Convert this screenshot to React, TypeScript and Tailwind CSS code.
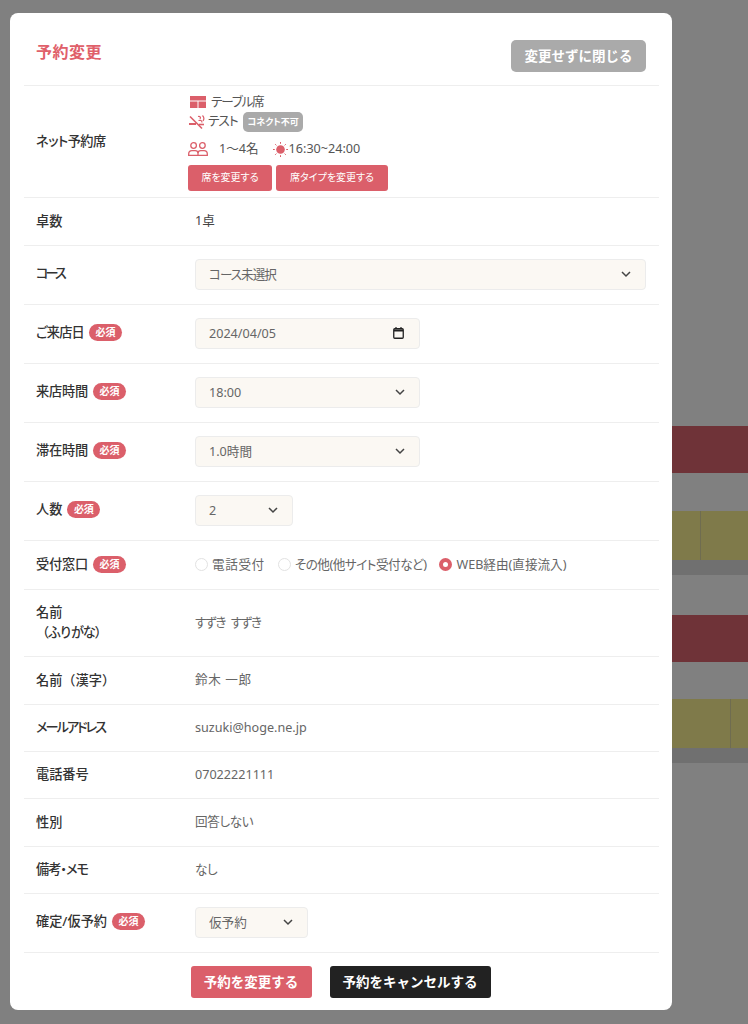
import React from 'react';

const required = (
  <span className="ml-[5px] inline-flex h-[17px] w-[33px] items-center justify-center rounded-full bg-[#db5f6a] align-[1px] text-[10px] font-bold leading-none text-white">
    必須
  </span>
);

function Chevron() {
  return (
    <svg className="pointer-events-none absolute top-1/2 h-[10px] w-[10px] -translate-y-1/2 right-[15px]" viewBox="0 0 10 10" fill="none" stroke="#444" strokeWidth="1.5">
      <path d="M1 3l4 4 4-4" />
    </svg>
  );
}

function Select({ value, width, tight }: { value: string; width: string; tight?: boolean }) {
  return (
    <div className={`relative ${width}`}>
      <select
        defaultValue={value}
        className={`h-[31px] w-full appearance-none rounded-[4px] border border-[#ececec] bg-[#fbf8f3] pl-[13px] pt-[2px] text-[12.6px] text-[#666] outline-none ${tight ? 'tracking-[-1px]' : ''}`}
      >
        <option>{value}</option>
      </select>
      <Chevron />
    </div>
  );
}

function DateField({ value }: { value: string }) {
  return (
    <div className="relative w-[225px]">
      <input
        type="text"
        readOnly
        value={value}
        className="h-[31px] w-full rounded-[4px] border border-[#ececec] bg-[#fbf8f3] pl-[13px] pt-[1px] text-[12.6px] text-[#666] outline-none"
      />
      <svg className="pointer-events-none absolute right-[16px] top-1/2 h-[12px] w-[11px] -translate-y-1/2" viewBox="0 0 11 12" fill="none" stroke="#222">
        <rect x="0.750" y="1.750" width="9.500" height="9.500" rx="1" strokeWidth="1.300" />
        <path d="M1 3.500h9" strokeWidth="2" />
        <path d="M3 0v2M8 0v2" strokeWidth="1.200" />
      </svg>
    </div>
  );
}

function Row({ label, badge, height, children }: { label: React.ReactNode; badge?: boolean; height: string; children: React.ReactNode }) {
  return (
    <div className={`flex items-center border-b border-[#eeeeee] ${height}`}>
      <div className="-mt-[2px] w-[171px] shrink-0 pl-3 text-[13.2px] font-medium leading-[20px] text-[#333]">
        {label}
        {badge && required}
      </div>
      <div className="min-w-0 flex-1 pr-[13px] text-[12.6px] text-[#666]">{children}</div>
    </div>
  );
}

function Radio({ label, checked, tracking }: { label: string; checked?: boolean; tracking?: string }) {
  return (
    <span className={`flex items-center gap-[4px] ${tracking ?? ''}`}>
      <span className={`h-[13px] w-[13px] rounded-full border bg-white ${checked ? 'border-[4px] border-[#db5f6a]' : 'border-[#e2e2e2]'}`} />
      {label}
    </span>
  );
}

function TableIcon() {
  return (
    <svg className="h-[12px] w-[16px]" viewBox="0 0 16 12" fill="#db5f6a">
      <rect x="0" y="0" width="16" height="4.500" />
      <rect x="0" y="5.500" width="7.500" height="6.500" />
      <rect x="8.500" y="5.500" width="7.500" height="6.500" />
    </svg>
  );
}

function NoSmokeIcon() {
  return (
    <svg className="h-[16px] w-[16px]" viewBox="0 0 16 16" fill="none" stroke="#db5f6a">
      <path d="M1 2.500l12 12" strokeWidth="1.600" />
      <path d="M0 10h7" strokeWidth="2" />
      <path d="M10 10.500h5" strokeWidth="1.600" />
      <path d="M9 2.500c2-.5 3 .5 2 2.500M9.500 6.500c2-.5 3.500 0 3.500 2M13.500 1.500c1.500 1.500 1.500 4 .5 5.500" strokeWidth="1.200" />
    </svg>
  );
}

function PeopleIcon() {
  return (
    <svg className="h-[14px] w-[20px]" viewBox="0 0 20 14" fill="none" stroke="#db5f6a" strokeWidth="1.300">
      <circle cx="5.600" cy="3.500" r="2.800" />
      <circle cx="14.400" cy="3.500" r="2.800" />
      <path d="M.7 13.300v-1.500c0-2 1.500-3.200 3.300-3.200h3.200c1.600 0 2.800 1.200 2.800 2.800v1.900zM10 13.300v-1.900c0-1.600 1.200-2.800 2.800-2.800H16c1.800 0 3.300 1.200 3.300 3.200v1.500z" />
    </svg>
  );
}

function SunIcon() {
  return (
    <svg className="h-[15px] w-[15px]" viewBox="0 0 15 15" fill="#db5f6a" stroke="#db5f6a">
      <circle cx="7.500" cy="7.500" r="4.300" stroke="none" />
      <path strokeWidth="1" d="M7.500 0v1.800M7.500 13.200V15M0 7.500h1.800M13.200 7.500H15M2.200 2.200l1.200 1.200M11.600 11.600l1.200 1.200M12.800 2.200l-1.200 1.200M3.400 11.600l-1.200 1.200" />
    </svg>
  );
}

export default function App() {
  return (
    <div
      className="relative h-[1024px] w-[748px] overflow-hidden bg-[#808080] [font-feature-settings:'palt']"
      style={{ fontFamily: '"Noto Sans", "Noto Sans CJK JP", sans-serif' }}
    >
      {/* behind the modal: timetable bars */}
      <div className="flex flex-col pl-[672px] pt-[426px]">
        <div className="h-[47px] bg-[#6f3338]" />
        <div className="h-[38px]" />
        <div className="flex h-[49px] bg-[#7f7a4a] pl-[28px]"><div className="w-px bg-[#6f6c50]" /></div>
        <div className="h-[15px] bg-[#707070]" />
        <div className="h-[40px]" />
        <div className="h-[47px] bg-[#6f3338]" />
        <div className="h-[37px]" />
        <div className="flex h-[49px] bg-[#7f7a4a] pl-[58px]"><div className="w-px bg-[#6f6c50]" /></div>
        <div className="h-[15px] bg-[#707070]" />
      </div>

      {/* modal */}
      <div className="absolute left-[10px] top-[13px] h-[997px] w-[662px] rounded-[8px] bg-white pl-[14px] pr-[13px]">
        <div className="flex h-[73px] items-start justify-between border-b border-[#eeeeee] pl-[12px] pr-[13px] pt-[27px]">
          <h1 className="text-[16px] font-bold leading-[24px] tracking-[0.5px] text-[#e0606a]">予約変更</h1>
          <button className="h-[32px] w-[135px] rounded-[5px] bg-[#aaaaaa] text-[13.5px] font-bold text-white [font-feature-settings:normal]">変更せずに閉じる</button>
        </div>

        <Row label={<span className="tracking-[-0.5px]">ネット予約席</span>} height="h-[112px]">
          <div className="-ml-[7px] flex flex-col items-start text-[#555]">
            <div className="ml-[2px] flex h-[19px] items-center gap-[5px]"><TableIcon /><span className="tracking-[-1.2px]">テーブル席</span></div>
            <div className="ml-[1px] flex h-[20px] items-center gap-[3px]">
              <NoSmokeIcon /><span className="tracking-[-1px]">テスト</span>
              <span className="ml-[3px] rounded-[5px] bg-[#aaaaaa] px-[4px] py-[3px] text-[9px] font-bold leading-[14px] text-white">コネクト不可</span>
            </div>
            <div className="mt-[9px] flex h-[17px] items-center">
              <PeopleIcon />
              <span className="ml-[11px]">1～4名</span>
              <span className="ml-[14px]"><SunIcon /></span>
              <span className="ml-[1px]">16:30~24:00</span>
            </div>
            <div className="mt-[7px] flex gap-[4px]">
              <button className="h-[26px] w-[84px] rounded-[3px] bg-[#db5f6a] text-[10px] text-white">席を変更する</button>
              <button className="h-[26px] w-[112px] rounded-[3px] bg-[#db5f6a] text-[10px] text-white">席タイプを変更する</button>
            </div>
          </div>
        </Row>
        <Row label="卓数" height="h-[48px]"><span className="text-[#444]">1卓</span></Row>
        <Row label={<span className="tracking-[-3px]">コース</span>} height="h-[59px] pb-[2px]"><Select value="コース未選択" width="w-full" tight /></Row>
        <Row label={<span className="tracking-[-0.8px]">ご来店日</span>} badge height="h-[59px] pb-[2px]"><DateField value="2024/04/05" /></Row>
        <Row label={<span className="tracking-[-0.2px]">来店時間</span>} badge height="h-[59px] pb-[2px]"><Select value="18:00" width="w-[225px]" /></Row>
        <Row label={<span className="tracking-[-0.2px]">滞在時間</span>} badge height="h-[59px] pb-[2px]"><Select value="1.0時間" width="w-[225px]" /></Row>
        <Row label="人数" badge height="h-[59px] pb-[2px]"><Select value="2" width="w-[98px]" /></Row>
        <Row label={<span className="tracking-[-0.2px]">受付窓口</span>} badge height="h-[49px]">
          <div className="flex items-center gap-[13px]">
            <Radio label="電話受付" tracking="tracking-[0.6px]" />
            <Radio label="その他(他サイト受付など)" tracking="tracking-[-0.5px]" />
            <Radio label="WEB経由(直接流入)" checked />
          </div>
        </Row>
        <Row label={<>名前<br /><span className="tracking-[-1.5px] [font-feature-settings:normal]">（ふりがな）</span></>} height="h-[67px]"><span className="tracking-[-1.4px] [word-spacing:4px]">すずき すずき</span></Row>
        <Row label={<span className="[font-feature-settings:normal]">名前（漢字）</span>} height="h-[48px]"><span className="tracking-[0.6px]">鈴木 一郎</span></Row>
        <Row label={<span className="tracking-[-2px]">メールアドレス</span>} height="h-[47px]">suzuki@hoge.ne.jp</Row>
        <Row label="電話番号" height="h-[47px]">07022221111</Row>
        <Row label="性別" height="h-[48px]"><span className="tracking-[-0.4px]">回答しない</span></Row>
        <Row label={<span className="tracking-[-1px]">備考・メモ</span>} height="h-[47px]"><span className="tracking-[-0.4px]">なし</span></Row>
        <Row label="確定/仮予約" badge height="h-[59px] pb-[2px]"><Select value="仮予約" width="w-[113px]" /></Row>

        <div className="flex justify-center gap-[18px] pr-[2px] pt-[13px]">
          <button className="h-[32px] w-[121px] rounded-[3px] bg-[#db5f6a] text-[13.5px] font-bold text-white [font-feature-settings:normal]">予約を変更する</button>
          <button className="h-[32px] w-[161px] rounded-[3px] bg-[#222222] text-[13.5px] font-bold text-white [font-feature-settings:normal]">予約をキャンセルする</button>
        </div>
      </div>
    </div>
  );
}
